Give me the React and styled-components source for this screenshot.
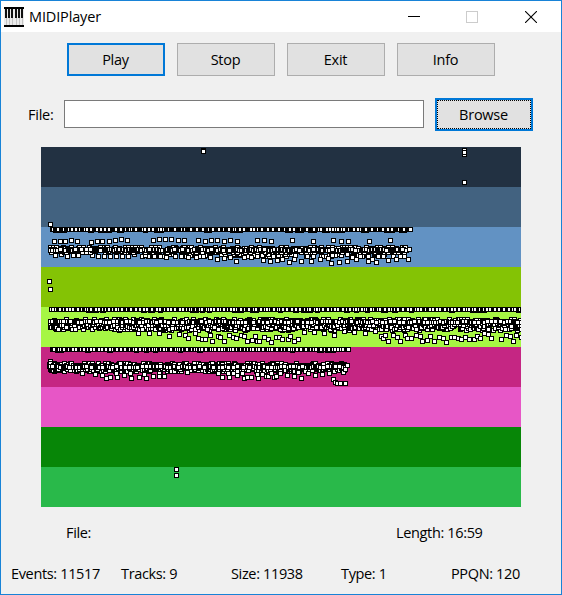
import React from "react";
import styled, { createGlobalStyle } from "styled-components";

const GlobalStyle = createGlobalStyle`
  *, *::before, *::after { box-sizing: border-box; }
  body { margin: 0; background: #f0f0f0; }
`;

const Window = styled.main`
  width: 562px;
  height: 595px;
  border: 1px solid #1883d7;
  background: #f0f0f0;
  color: #000;
  font: 14.5px/20px "Open Sans", "Noto Sans", sans-serif;
  letter-spacing: -0.25px;
  overflow: hidden;
`;

const TitleBar = styled.header`
  display: flex;
  align-items: center;
  height: 31px;
  padding-left: 3px;
  background: #fff;
`;

const Title = styled.h1`
  flex: 1;
  margin: 0 0 0 5px;
  font: inherit;
  letter-spacing: -0.15px;
`;

const CaptionButton = styled.button`
  display: grid;
  place-items: center;
  width: ${(p) => p.$width}px;
  height: 31px;
  padding: 0;
  border: 0;
  background: transparent;
  color: ${(p) => (p.disabled ? "#ccc" : "#000")};
`;

const Toolbar = styled.div`
  display: flex;
  gap: 12px;
  padding: 11px 0 0 66px;
`;

const PushButton = styled.button`
  width: 98px;
  height: 33px;
  padding: 0 1px 0 0;
  border: ${(p) => (p.$accent ? "2px solid #0078d7" : "1px solid #adadad")};
  background: #e1e1e1;
  color: inherit;
  font: inherit;
  letter-spacing: inherit;
  outline: ${(p) => (p.$focused ? "1px dotted #000" : "none")};
  outline-offset: -3px;
`;

const FileRow = styled.div`
  display: flex;
  align-items: flex-start;
  margin-top: 22px;
  padding-left: 27px;
`;

const FieldLabel = styled.label`
  width: 36px;
  line-height: 33px;
`;

const PathInput = styled.input`
  width: 360px;
  height: 28px;
  margin: 2px 11px 0 0;
  padding: 0 4px;
  border: 1px solid #7a7a7a;
  border-radius: 0;
  background: #fff;
  font: inherit;
`;

const TrackView = styled.svg`
  display: block;
  width: 480px;
  height: 360px;
  margin: 16px 0 0 40px;
`;

const StatusRow = styled.div`
  display: grid;
  grid-template-columns: ${(p) => p.$columns};
  margin-top: ${(p) => p.$top}px;
  padding-left: ${(p) => p.$left}px;
  letter-spacing: -0.35px;
`;

const TRACK_COLORS = [
  "#223142", "#426280", "#6292c3", "#84c305", "#a6f644",
  "#c52683", "#e756c6", "#078607", "#29b94a",
];

function makeRandom(seed) {
  let s = seed;
  return () => {
    s = (s * 1664525 + 1013904223) >>> 0;
    return s / 4294967296;
  };
}

// Single line of control events: bunched hits separated by small rests.
function eventLine(seed, from, to, y, longest) {
  const rnd = makeRandom(seed);
  const out = [];
  let x = from;
  while (x < to) {
    const drop = rnd() < 0.2;
    const bunch = 1 + Math.floor(rnd() * longest);
    for (let i = 0; i < bunch && x < to; i++) {
      out.push([x, drop ? y + 1 : y]);
      out.push([x, y]);
      x += 1;
    }
    x += rnd() < 0.45 ? 1 : 2;
  }
  out.push([to, y]);
  return out;
}

// Overlapping voices; each one hovers about its own height.
function voices(seed, from, to, levels, tightness) {
  const rnd = makeRandom(seed);
  const out = [];
  levels.forEach(([y, spread, density]) => {
    let x = from + Math.floor(rnd() * 3);
    while (x <= to) {
      if (rnd() < density) out.push([x, y + Math.floor(rnd() * (spread + 1))]);
      x += rnd() < tightness ? 1 : 2 + Math.floor(rnd() * 3);
    }
  });
  return out.map((n) => [n, n[0] + rnd() * 4]).sort((a, b) => a[1] - b[1]).map((n) => n[0]);
}

const STRAY = [
  [201, 148], [201, 149], [462, 148], [462, 152], [462, 150], [462, 180],
  [48, 222], [47, 279], [48, 287], [174, 467], [174, 473],
];

const BLUE_UPPER = [
  [52, 239], [58, 239], [63, 239], [69, 238], [75, 239], [89, 240], [95, 239],
  [100, 239], [107, 239], [113, 238], [119, 237], [125, 238], [151, 238],
  [157, 237], [163, 237], [169, 237], [176, 238], [182, 238], [196, 238],
  [203, 239], [209, 238], [215, 238], [222, 239], [228, 238], [235, 239],
  [255, 238], [262, 238], [269, 239], [290, 238], [311, 239], [331, 238],
  [339, 239], [346, 239], [367, 239], [388, 238],
];

const BLUE_LOWER = [
  [53, 253], [59, 252], [65, 254], [71, 253], [76, 253], [90, 253], [96, 254],
  [102, 254], [108, 254], [114, 254], [120, 254], [126, 254], [132, 252],
  [143, 253], [152, 254], [158, 254], [164, 255], [173, 254], [179, 254],
  [186, 255], [194, 255], [201, 254], [208, 255], [215, 257], [222, 256],
  [228, 255], [234, 259], [242, 255], [249, 255], [255, 254], [261, 258],
  [268, 259], [275, 258], [280, 257], [287, 260], [292, 257], [299, 259],
  [305, 254], [309, 259], [318, 257], [326, 256], [329, 261], [337, 260],
  [345, 259], [350, 255], [354, 257], [358, 254], [366, 259], [370, 257],
  [374, 260], [381, 254], [386, 258], [394, 257], [398, 254], [402, 254], [406, 257],
];

const LIME_LOWER = [
  [136, 331], [147, 331], [157, 331], [167, 334], [177, 332], [183, 333],
  [186, 336], [193, 331], [196, 336], [200, 337], [203, 337], [208, 333],
  [210, 339], [216, 334], [218, 335], [222, 339], [227, 333], [231, 335],
  [234, 336], [239, 333], [242, 334], [245, 339], [250, 338], [253, 334],
  [255, 339], [257, 339], [262, 335], [266, 337], [269, 340], [274, 335],
  [277, 335], [280, 337], [286, 337], [288, 334], [292, 339], [296, 337],
  [302, 330], [312, 330], [322, 331], [332, 333], [342, 329], [352, 330],
  [363, 331], [373, 329], [379, 334], [381, 336], [383, 333], [386, 339],
  [391, 333], [395, 335], [398, 339], [403, 333], [405, 336], [409, 336],
  [414, 333], [418, 334], [420, 339], [425, 338], [428, 334], [432, 339],
  [437, 335], [441, 336], [444, 340], [449, 335], [452, 335], [456, 336],
  [459, 337], [463, 335], [467, 337], [472, 337], [475, 334], [478, 336],
  [482, 331], [486, 332], [489, 336], [499, 337], [504, 333], [508, 334],
  [511, 339], [514, 333], [519, 335],
];

const PINK_LOWER = [
  [80, 371], [93, 372], [100, 373], [104, 376], [108, 375], [114, 371],
  [115, 375], [122, 373], [128, 371], [129, 376], [137, 375], [142, 372],
  [144, 376], [151, 374], [157, 371], [157, 374], [162, 374], [185, 370],
  [216, 371], [220, 375], [226, 371], [227, 375], [231, 371], [235, 373],
  [240, 371], [242, 376], [245, 375], [249, 375], [255, 372], [256, 376],
  [260, 372], [264, 374], [266, 374], [269, 371], [272, 375], [274, 374],
  [278, 371], [285, 373], [292, 374], [296, 370], [299, 376], [306, 371],
  [313, 373], [320, 372], [327, 371], [331, 377], [333, 380], [335, 381],
  [338, 381], [343, 381], [341, 370], [343, 367], [345, 363],
];

const NOTES = [
  ...STRAY,
  ...eventLine(11, 50, 408, 227, 5),
  ...BLUE_UPPER,
  ...voices(25, 140, 402, [[252, 2, 0.7]], 0.3),
  ...BLUE_LOWER,
  ...voices(21, 48, 404, [[245, 1, 0.6], [248, 2, 1]], 0.4),
  ...voices(22, 48, 404, [[247, 1, 1]], 0.88),
  [407, 247],
  ...eventLine(31, 49, 520, 307, 3),
  ...voices(36, 110, 520, [[326, 2, 0.5]], 0.2),
  ...LIME_LOWER,
  ...voices(35, 48, 520, [[317, 2, 0.8], [320, 3, 1], [322, 3, 1], [325, 2, 0.8]], 0.4),
  ...voices(37, 48, 520, [[319, 1, 1]], 0.6),
  ...eventLine(41, 50, 346, 347, 3),
  [48, 359],
  ...voices(45, 47, 343, [[361, 2, 0.9], [363, 2, 1], [365, 3, 1], [367, 2, 0.7]], 0.5),
  ...voices(46, 47, 343, [[364, 1, 1]], 0.7),
  ...PINK_LOWER,
];

function Tracks() {
  return (
    <TrackView viewBox="41 147 480 360" shapeRendering="crispEdges" aria-label="Track events">
      {TRACK_COLORS.map((color, i) => (
        <rect key={color} x="41" y={147 + i * 40} width="480" height="40" fill={color} />
      ))}
      <g fill="#fff" stroke="#000">
        {NOTES.map(([x, y], i) => (
          <rect key={i} x={x + 0.5} y={y + 0.5} width="4" height="4" />
        ))}
      </g>
    </TrackView>
  );
}

function PianoIcon() {
  return (
    <svg width="20" height="20" viewBox="0 0 20 20" shapeRendering="crispEdges" aria-hidden="true">
      <rect width="20" height="20" fill="#ececec" />
      {[2, 5, 8, 12, 15, 18].map((x) => (
        <rect key={x} x={x} y="2" width="1" height="16" fill="#c4c4c4" />
      ))}
      {[1, 4, 7, 11, 14, 17].map((x) => (
        <rect key={x} x={x} y="2" width="2" height="9" fill="#111" />
      ))}
      <path d="M0 0h20v2H0zM0 18h20v2H0z" fill="#000" />
    </svg>
  );
}

export default function App() {
  return (
    <>
      <GlobalStyle />
      <Window>
        <TitleBar>
          <PianoIcon />
          <Title>MIDIPlayer</Title>
          <CaptionButton $width={58} aria-label="Minimize">
            <svg width="12" height="12" shapeRendering="crispEdges">
              <path d="M0 5.5h12" stroke="currentColor" />
            </svg>
          </CaptionButton>
          <CaptionButton $width={58} aria-label="Maximize" disabled>
            <svg width="12" height="12" shapeRendering="crispEdges">
              <rect x=".5" y=".5" width="11" height="11" fill="none" stroke="currentColor" />
            </svg>
          </CaptionButton>
          <CaptionButton $width={60} aria-label="Close">
            <svg width="12" height="12">
              <path d="M0 0L12 12M12 0L0 12" stroke="currentColor" strokeWidth="1.1" />
            </svg>
          </CaptionButton>
        </TitleBar>
        <Toolbar>
          <PushButton $accent>Play</PushButton>
          <PushButton>Stop</PushButton>
          <PushButton>Exit</PushButton>
          <PushButton>Info</PushButton>
        </Toolbar>
        <FileRow>
          <FieldLabel htmlFor="path">File:</FieldLabel>
          <PathInput id="path" />
          <PushButton $accent $focused>Browse</PushButton>
        </FileRow>
        <Tracks />
        <StatusRow $columns="330px auto" $top={16} $left={65}>
          <span>File:</span>
          <span>Length: 16:59</span>
        </StatusRow>
        <StatusRow $columns="repeat(5, 110px)" $top={21} $left={10}>
          <span>Events: 11517</span>
          <span>Tracks: 9</span>
          <span>Size: 11938</span>
          <span>Type: 1</span>
          <span>PPQN: 120</span>
        </StatusRow>
      </Window>
    </>
  );
}
